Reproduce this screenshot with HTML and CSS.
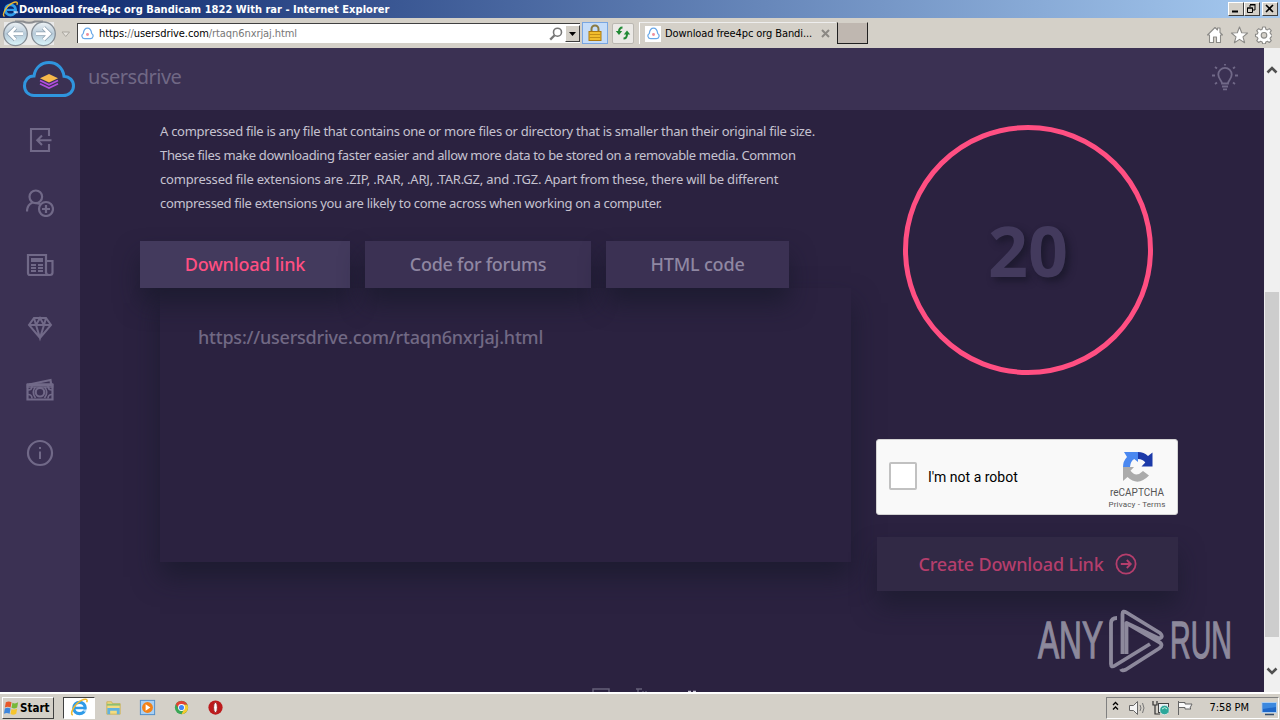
FILE: index.html
```html
<!DOCTYPE html>
<html lang="en">
<head>
<meta charset="utf-8">
<title>Download free4pc org Bandicam 1822 With rar</title>
<link rel="stylesheet" href="styles.css">
</head>
<body>
<svg width="0" height="0" class="defs">
  <defs>
    <symbol id="ie" viewBox="0 0 20 20">
      <circle cx="10" cy="10.5" r="6" fill="none" stroke="#2f9be8" stroke-width="3.4"/>
      <path d="M5 10.5h11" stroke="#2f9be8" stroke-width="2.6"/>
      <path d="M13 12.2h6v2.2h-4z" fill="#fff" opacity=".65"/>
      <path d="M3 18C-1 17 5 6 12 2.5c5-2.5 7-1 5.500 2" fill="none" stroke="#f0b92e" stroke-width="1.6"/>
    </symbol>
    <symbol id="fav" viewBox="0 0 14 14">
      <path d="M4 12.500a3 3 0 0 1-1.500-5.600C3 3 5 1.300 7 1.300S11 3 11.500 6.900A3 3 0 0 1 10 12.500z" fill="#fff" stroke="#68a8e8" stroke-width="1.300"/>
      <circle cx="7" cy="8" r="1.600" fill="#ee8d9b"/>
    </symbol>
  </defs>
</svg>

<header class="titlebar">
  <svg class="title-icon"><use href="#ie"/></svg>
  <h1 class="title"><span>Download free4pc org Bandicam 1822 With rar - Internet Explorer</span></h1>
  <div class="winbtns">
    <span class="winbtn"><svg viewBox="0 0 13 11"><path d="M3 8.500h6" stroke="#000" stroke-width="2"/></svg></span>
    <span class="winbtn"><svg viewBox="0 0 13 11"><path d="M5 4V2h5v5H8M5 1.500h5.500M2.500 5h5v4.500h-5zM2 5h6" fill="none" stroke="#000"/></svg></span>
    <span class="winbtn gap"><svg viewBox="0 0 13 11"><path d="M3 2l7 7M10 2L3 9" stroke="#000" stroke-width="1.600"/></svg></span>
  </div>
</header>

<div class="toolbar">
  <svg class="nav" viewBox="0 0 72 29">
    <defs><linearGradient id="ng" x1="0" y1="0" x2="0" y2="1"><stop offset="0" stop-color="#eef3f6"/><stop offset=".5" stop-color="#b8cbd9"/><stop offset="1" stop-color="#d9f4fb"/></linearGradient></defs>
    <path d="M4 3h50v23H4z" fill="#e9e9e9"/>
    <path d="M15 2.500h8q6 2.500 12 0h8" fill="none" stroke="#8c8d90" stroke-width="2"/>
    <circle cx="15.500" cy="14.800" r="11.800" fill="url(#ng)" stroke="#868e96" stroke-width="1.300"/>
    <circle cx="43.500" cy="14.800" r="11.800" fill="url(#ng)" stroke="#868e96" stroke-width="1.300"/>
    <path d="M23 14.800H9.500M15.500 8.800l-6 6 6 6M36 14.800h13.500M43.500 8.800l6 6-6 6" fill="none" stroke="#8da0b0" stroke-width="4.400"/>
    <path d="M23 14.800H9.500M15.500 8.800l-6 6 6 6M36 14.800h13.500M43.500 8.800l6 6-6 6" fill="none" stroke="#fff" stroke-width="2.900"/>
    <path d="M62 13h7.500l-3.750 4.500z" fill="#e5e2dd" stroke="#aaa69f"/>
  </svg>
  <div class="address">
    <svg class="fav"><use href="#fav"/></svg>
    <span class="url"><b>https:</b>//<b>usersdrive.com</b>/rtaqn6nxrjaj.html</span>
    <svg class="search" viewBox="0 0 14 14"><circle cx="8.500" cy="5.200" r="4" fill="none" stroke="#777" stroke-width="1.600"/><path d="M5.600 8.200L1.200 12.600" stroke="#777" stroke-width="2.300"/></svg>
    <span class="drop"><svg viewBox="0 0 7 4"><path d="M0 0h7L3.500 4z"/></svg></span>
  </div>
  <span class="lock"><svg viewBox="0 0 16 18"><path d="M4.500 8V5a3.500 3.500 0 0 1 7 0v3" fill="none" stroke="#8b7a40" stroke-width="2"/><rect x="2" y="7.500" width="12" height="9" fill="#f2bd2c" stroke="#ad7a11"/><path d="M2.500 10.500h11M2.500 13.500h11" stroke="#c58f16"/></svg></span>
  <span class="refresh"><svg viewBox="0 0 16 16"><path d="M7.500 2.500Q4 2.500 4 7M8.500 13.500Q12 13.500 12 9" fill="none" stroke="#218a35" stroke-width="2"/><path d="M.8 6h6.400L4 10zM8.800 9.500h6.400L12 5.500z" fill="#218a35"/></svg></span>
  <div class="tab">
    <span class="tab-fav"><svg class="fav"><use href="#fav"/></svg></span>
    <span class="tab-text">Download free4pc org Bandi...</span>
    <svg class="tab-x" viewBox="0 0 9 9"><path d="M1 1l7 7M8 1L1 8" stroke="#8b8883" stroke-width="2"/></svg>
  </div>
  <span class="newtab"></span>
  <svg class="tools" viewBox="0 0 66 18">
    <g fill="#fff" stroke="#8b8a87" stroke-width="1.100" stroke-linejoin="round">
      <path d="M1.500 9L9 1.500 11.500 4V2h2.500v4.500L16.500 9h-2v7.500h-4V11h-3v5.500h-4V9z"/>
      <path d="M33.500 1l2.200 5.800 5.900.2-4.600 3.800 1.600 5.900-5.100-3.300-5.100 3.300L30 10.800 25.400 7l5.900-.2z"/>
      <path d="M56.600 1h2.800l.4 2.200 1.600.7 1.900-1.300 2 2L64 6.500l.7 1.500 1.300.4v2.200l-1.300.6-.7 1.500 1.300 1.800-2 2-1.900-1.200-1.600.6-.4 1.900h-2.800l-.4-1.900-1.600-.6-1.900 1.200-2-2 1.300-1.800-.7-1.500-1.800-.6V8.400l1.800-.4.700-1.500-1.300-1.900 2-2 1.900 1.300 1.600-.7z"/>
      <circle cx="58" cy="9.300" r="2.800" fill="#d4d0c8"/>
    </g>
  </svg>
</div>

<main class="viewport">
  <div class="page">
    <div class="site-head">
      <svg class="logo" viewBox="0 0 54 38">
        <path d="M12 35.500h29c6 0 10.500-4 10.500-9.500 0-5.500-4-9.500-9.500-9.800C41 8 35 2.500 27 2.500S13 8 12 16C6 16 2.500 20.500 2.500 26S6.500 35.500 12 35.500z" fill="none" stroke="#2f95de" stroke-width="3"/>
        <path d="M27 14l9 4.300-9 4.200-9-4.200z" fill="#f6b84b"/>
        <path d="M18 20.500l9 4.200 9-4.200M18 23.800l9 4.200 9-4.200" fill="none" stroke="#b04ddd" stroke-width="1.800"/>
      </svg>
      <span class="brand">usersdrive</span>
      <svg class="bulb line" viewBox="0 0 28 28"><path d="M11 19.500c0-3-3.700-4.500-3.700-9a6.700 6.700 0 0 1 13.400 0c0 4.500-3.700 6-3.700 9zM11 22.500h6M12 25.300h4M1 11.500h3M24 11.500h3M4 3l2 1.500M24 3l-2 1.500M4 20l2-1.500M24 20l-2-1.500M14 0v1.500" stroke-width="1.800"/></svg>
    </div>
    <div class="body">
      <nav class="side">
        <svg class="line" viewBox="0 0 28 28"><path d="M23 10V3H5v22h18v-7M25.500 14.200H11.500M16 9.500l-4.700 4.700 4.700 4.700" stroke-width="2.100"/></svg>
        <svg class="line" viewBox="0 0 28 28"><circle cx="9.800" cy="7.800" r="6.300"/><path d="M1 22.500q0-6.500 5.500-9M10 14l4 1"/><circle cx="20" cy="20" r="7"/><path d="M20 16v8M16 20h8" stroke-width="2.200"/></svg>
        <svg class="line" viewBox="0 0 28 28"><path d="M20 22V4H2v18q0 2 2 2h20q2.500 0 2.500-2.500V10H20M20 21q0 3 3 3"/><path d="M5 8h12M5 10h12M5 14h5M12 14h5M5 17h5M12 17h5M5 20h5M12 20h5" stroke-width="2.100"/></svg>
        <svg class="line" viewBox="0 0 28 28"><path d="M8 4h12l5 7-11 13L3 11zM3 11h22M8 4l2 7 4 13 4-13 2-7M10 11l4-7 4 7" stroke-width="2"/></svg>
        <svg class="line" viewBox="0 0 28 28"><path d="M1.500 9h25v14.500h-25zM3 8.500L24.500 4l.7 4.500" /><circle cx="14" cy="16.200" r="4.300" stroke-width="2.200"/><path d="M1.500 8h25v3h-25zM2 14q4 0 4-4M26 14q-4 0-4-4M2 18.500q4 0 4 4M26 18.500q-4 0-4 4M9.500 11q-4.500 5 0 11M18.500 11q4.500 5 0 11" stroke-width="1.700"/></svg>
        <svg class="line" viewBox="0 0 28 28"><circle cx="14" cy="14" r="12"/><path d="M14 8v2M14 12.500V20" stroke-width="2"/></svg>
      </nav>
      <section class="content">
        <div class="left">
          <p class="desc">
            <span class="l1">A compressed file is any file that contains one or more files or directory that is smaller than their original file size.</span>
            <span class="l2">These files make downloading faster easier and allow more data to be stored on a removable media. Common</span>
            <span class="l3">compressed file extensions are .ZIP, .RAR, .ARJ, .TAR.GZ, and .TGZ. Apart from these, there will be different</span>
            <span class="l4">compressed file extensions you are likely to come across when working on a computer.</span>
          </p>
          <div class="tabs">
            <span class="btn b1">Download link</span>
            <span class="btn b2">Code for forums</span>
            <span class="btn b3">HTML code</span>
          </div>
          <div class="panel"><span>https://usersdrive.com/rtaqn6nxrjaj.html</span></div>
          <div class="foot-hints">
            <svg viewBox="0 0 110 4"><path d="M1 4V1h16v3" fill="none" stroke="#656078" stroke-width="1.500"/><path d="M44 1h6M46 1v3M51 3v1M54 3v1" stroke="#656078" stroke-width="1.400"/><path d="M96 3.500h3M101 3.500h3" stroke="#c7c3d4" stroke-width="1.500"/></svg>
          </div>
        </div>
        <div class="right">
          <div class="timer"><span>20</span></div>
          <div class="captcha">
            <span class="check"></span>
            <span class="robot">I'm not a robot</span>
            <div class="rc">
              <svg viewBox="0 0 32 32">
                <path d="M16 1q6 0 10 4l4.500-3.500V15.500H19.500l3.800-4Q21 8 16 8z" fill="#1c3aa9"/>
                <path d="M1 16Q1 10 5 6L2 1h14v10l-3.800-3Q8.500 10 8 16z" fill="#4a88f0"/>
                <path d="M1 16h11l-3.500 3.800Q14 27 21 20l6 4.500Q16 36 5.500 26L1 30z" fill="#ababab"/>
              </svg>
              <span class="rc-name">reCAPTCHA</span>
              <span class="rc-links">Privacy - Terms</span>
            </div>
          </div>
          <div class="create"><span>Create Download Link</span>
            <svg viewBox="0 0 22 22"><circle cx="11" cy="11" r="9.600"/><path d="M5.800 11h10M11.800 7l4 4-4 4"/></svg>
          </div>
        </div>
      </section>
    </div>
    <div class="watermark">
      <span class="wm wa">ANY</span>
      <svg viewBox="0 0 56 64"><path d="M9 9Q3 9 3 14V55Q3 59 7 56.500L42 35M14.500 45V5Q14.500 1 18.500 3.500L52 24Q56 28 51 29.500L18.500 14M13 60Q14 62.500 18 60.500L51 39.500Q56 36 51 33L18.500 14V45" fill="none" stroke="#8d899c" stroke-width="3.800" stroke-linejoin="round"/></svg>
      <span class="wm wr">RUN</span>
    </div>
  </div>
  <aside class="scroll">
    <svg viewBox="0 0 12 8"><path d="M1.500 6.500L6 2l4.500 4.500" /></svg>
    <i class="thumb"></i>
    <svg viewBox="0 0 12 8"><path d="M1.500 1.500L6 6l4.500-4.500"/></svg>
  </aside>
</main>

<footer class="taskbar">
  <div class="start">
    <svg viewBox="0 0 18 16"><path d="M3 2q3-2 6 0L8 7.500q-3-1.500-6 0z" fill="#e8582a"/><path d="M10 2.500q3 1.500 6-.5l-1 5.500q-3 2-6 .3z" fill="#77b83a"/><path d="M2 8.500q3-1.500 6 0L7 14q-3-1.500-6 0z" fill="#3e86dd"/><path d="M9 9q3 1.500 6-.5L14 14q-3 2-6 .3z" fill="#f6c52d"/></svg>
    <span>Start</span>
  </div>
  <span class="task active"><svg viewBox="0 0 20 20"><use href="#ie"/></svg></span>
  <span class="task"><svg viewBox="0 0 20 20"><path d="M3 4h5l1 2h8v11H3z" fill="#f3dc80" stroke="#cdb158"/><path d="M3 7h14" stroke="#8dbf74" stroke-width="2"/><path d="M5 17v-5h10v5" fill="none" stroke="#62b2de" stroke-width="3"/></svg></span>
  <span class="task"><svg viewBox="0 0 20 20"><rect x="2.500" y="2.500" width="15" height="15" fill="#a9d0f4" stroke="#4e8ecb"/><circle cx="10" cy="10" r="5.700" fill="#f38218"/><path d="M8 6.500v7l5-3.500z" fill="#fff"/></svg></span>
  <span class="task"><svg viewBox="0 0 20 20"><circle cx="10" cy="10" r="7" fill="#3aa655"/><path d="M4 6.500A7 7 0 0 1 16.200 7H10l-3 4z" fill="#e34133"/><path d="M16.200 7A7 7 0 0 1 10 17l3-6-1-4z" fill="#f7c92e"/><circle cx="10" cy="10" r="3.600" fill="#fff"/><circle cx="10" cy="10" r="2.700" fill="#4285f4"/></svg></span>
  <span class="task"><svg viewBox="0 0 20 20"><circle cx="10" cy="10" r="7.500" fill="#bd1a1c"/><ellipse cx="10" cy="10" rx="2" ry="5.200" fill="#fff" stroke="#861012" stroke-width=".8"/></svg></span>
  <div class="tray">
    <svg viewBox="0 0 88 20">
      <path d="M5 7l2.500-2.500L10 7M5 11.500L7.500 9l2.500 2.500" fill="none" stroke="#000" stroke-width="1.300"/>
      <path d="M21.500 7.500h4l4-4v13l-4-4h-4z" fill="#f4f4f4" stroke="#666"/><path d="M32 7q2 3 0 6M34.500 5q3 5 0 10" fill="none" stroke="#777"/>
      <rect x="50.500" y="5.500" width="10" height="9" fill="#e8f0f4" stroke="#444"/><path d="M45 3v4h4V3M47 7v9h5" fill="none" stroke="#333" stroke-width="1.200"/><circle cx="56.500" cy="12" r="4.700" fill="#2ca79a" stroke="#e8f0f4" stroke-width=".7"/><path d="M54 11q3-3 5 0" fill="none" stroke="#c7f2dc"/>
      <path d="M70.500 3v14M71 4.500h6v1.500h7l-2 4 1 1h-6v-1.500h-6" fill="#fafafa" stroke="#666"/>
    </svg>
    <span class="clock">7:58 PM</span>
    <svg class="desk" viewBox="0 0 16 16"><rect x="1" y="2.500" width="14.500" height="10" fill="#1e67c8" stroke="#abcdf0"/><path d="M2 3h13v4L2 9z" fill="#3b88df"/><path d="M4 14.500h9" stroke="#344d6b" stroke-width="1.500"/></svg>
  </div>
</footer>
</body>
</html>
```
FILE: styles.css
```css
* { box-sizing: border-box; }
body {
  margin: 0; width: 1280px; height: 720px; overflow: hidden;
  display: flex; flex-direction: column; background: #d4d0c8;
  font-family: "DejaVu Sans Condensed", "DejaVu Sans", sans-serif; font-size: 10.5px; color: #000;
}
svg { display: block; flex: none; }
span { white-space: nowrap; }
.defs { position: absolute; }

.titlebar { height: 18px; flex: none; display: flex; align-items: center; padding: 0 2px 0 2px; background: linear-gradient(90deg, #0a246a, #a6caf0); }
.title-icon { width: 17px; height: 17px; }
.title { margin: 0; flex: 1; font-size: 11px; font-weight: bold; color: #fff; line-height: 17px; letter-spacing: .03px; }
.winbtns { display: flex; }
.winbtn { width: 16px; height: 14px; background: #d4d0c8; border: 1px solid; border-color: #fff #404040 #404040 #fff; }
.winbtn svg { width: 13px; height: 11px; }
.winbtn.gap { margin-left: 2px; }

.toolbar { height: 30px; flex: none; display: flex; align-items: center; background: #d4d0c8; padding: 0 8px 0 0; }
.nav { width: 72px; height: 29px; margin-right: 5px; }
.address { width: 503px; height: 20px; background: #fff; border-top: 1px solid #404040; border-left: 1px solid #404040; display: flex; align-items: center; padding-left: 3px; }
.fav { width: 13px; height: 13px; }
.url { flex: 1; padding-left: 5px; color: #777; font-size: 11px; letter-spacing: -.08px; }
.url b { font-weight: normal; color: #000; }
.search { width: 14px; height: 14px; margin-right: 2px; }
.drop { width: 15px; height: 17px; background: #d4d0c8; border: 1px solid; border-color: #fff #404040 #404040 #fff; display: grid; place-items: center; }
.drop svg { width: 7px; height: 4px; }
.lock { width: 26px; height: 22px; margin-left: 2px; background: #c5dcf8; border: 1px solid #79a6e1; display: grid; place-items: center; }
.lock svg { width: 16px; height: 18px; }
.refresh { width: 22px; height: 21px; margin-left: 4px; background: #ebe9e6; border: 1px solid #bbb8b2; border-radius: 2px; display: grid; place-items: center; }
.refresh svg { width: 16px; height: 16px; }
.tab { width: 197px; height: 22px; margin-left: 5px; border-left: 1px solid #fff; border-top: 1px solid #eee; display: flex; align-items: center; padding-left: 5px; }
.tab-fav { width: 16px; height: 16px; background: #fff; display: grid; place-items: center; }
.tab-text { width: 148px; padding-left: 4px; font-size: 11px; letter-spacing: -.1px; }
.tab-x { width: 9px; height: 9px; margin-left: 12px; }
.newtab { width: 31px; height: 22px; margin-left: 1px; background: #bfb7b0; border: 1px solid; border-color: #d4d0c8 #202020 #202020 #202020; }
.tools { width: 66px; height: 18px; margin: 3px 0 0 auto; }

.viewport { height: 644px; flex: none; display: flex; }
.page { width: 1264px; position: relative; background: #2b2240; overflow: hidden; font-family: "Noto Sans", "Open Sans", sans-serif; }
.site-head { height: 62px; background: #3b3153; display: flex; align-items: center; padding: 0 25px 0 22px; }
.logo { width: 54px; height: 38px; }
.brand { flex: 1; padding-left: 12px; margin-top: -5px; font-size: 20px; color: #706885; letter-spacing: -.48px; }
.line { fill: none; stroke: #716988; stroke-width: 2.200; }
.bulb { width: 28px; height: 28px; margin-top: -2px; }
.body { display: flex; height: 582px; }
.side { width: 80px; background: #3b3153; display: flex; flex-direction: column; align-items: center; gap: 34.600px; padding-top: 16px; }
.side svg { width: 28px; height: 28px; }

.content { display: flex; flex: 1; }
.left { width: 771px; padding: 9px 0 0 80px; }
.desc { margin: 0; width: 691px; height: 122px; color: #c6c2d0; font-size: 13px; line-height: 24px; }
.desc span { display: block; }
.l1 { letter-spacing: -.275px; }
.l2 { letter-spacing: -.35px; }
.l3 { letter-spacing: -.19px; }
.l4 { letter-spacing: -.32px; }
.tabs { position: relative; z-index: 1; display: flex; gap: 15px; margin-left: -20px; }
.btn { height: 47px; line-height: 47px; text-align: center; font-size: 18px; font-weight: 500; letter-spacing: -.18px; color: #8f87a2; background: #3b3153; box-shadow: 0 15px 25px rgba(20,24,38,.6); }
.b1 { width: 210px; color: #ff4f82; background: #433a5d; }
.b2 { width: 226px; letter-spacing: -.27px; }
.b3 { width: 183px; }
.panel { width: 691px; height: 274px; padding: 37px 38px; font-size: 18px; line-height: 25px; font-weight: 500; letter-spacing: -.22px; color: #716984; box-shadow: 0 15px 25px rgba(20,24,38,.6); }
.foot-hints { padding: 126px 0 0 432px; }
.foot-hints svg { width: 110px; height: 4px; }
.right { width: 302px; margin-left: 25px; padding-top: 15px; }
.timer { width: 250px; height: 250px; margin-left: 27px; border: 5px solid #ff4f82; border-radius: 50%; display: grid; place-items: center; font: bold 70px "Open Sans", sans-serif; color: #433a5d; text-shadow: 4px 4px 7px rgba(20,20,35,.65); }
.timer span { margin-top: -1px; }
.captcha { margin-top: 64px; height: 76px; background: #f9f9f9; border: 1px solid #d3d3d3; border-radius: 3px; display: flex; align-items: center; padding: 0 11px 0 12px; font-family: Roboto, sans-serif; }
.check { width: 28px; height: 28px; border: 2px solid #c1c1c1; border-radius: 2px; background: #fff; margin-top: -2px; }
.robot { flex: 1; padding-left: 11px; font-size: 14px; color: #000; }
.rc { width: 58px; display: flex; flex-direction: column; align-items: center; color: #555; padding-top: 7px; }
.rc svg { width: 32px; height: 32px; margin-left: 2px; }
.rc-name { font-size: 10px; line-height: 12px; margin-top: 4px; }
.rc-links { font-size: 8px; line-height: 12px; letter-spacing: .18px; }
.create { width: 301px; height: 54px; margin: 22px 0 0 1px; display: flex; align-items: center; justify-content: center; gap: 11px; background: #312945; color: #b53e6c; font-size: 18px; font-weight: 500; letter-spacing: -.17px; box-shadow: 0 15px 25px rgba(20,24,38,.5); }
.create svg { width: 22px; height: 22px; fill: none; stroke: #b53e6c; stroke-width: 1.800; }

.watermark { position: absolute; left: 1038px; top: 561px; display: flex; align-items: center; color: #8d899c; height: 64px; }
.watermark svg { width: 56px; height: 64px; margin: 0 6px; }
.wm { width: 64px; font: 51px/64px "Liberation Sans", sans-serif; -webkit-text-stroke: 1.300px #8d899c; transform-origin: 0 50%; }
.wa { transform: scaleX(.62); }
.wr { width: 62px; transform: scaleX(.56); }

.scroll { width: 16px; background: #f0f0f0; display: flex; flex-direction: column; align-items: center; padding: 18px 0 17px; }
.scroll svg { width: 12px; height: 8px; fill: none; stroke: #505050; stroke-width: 2.600; }
.thumb { width: 14px; height: 345px; margin: 218px 0 auto; background: #cdcdcd; }

.taskbar { height: 28px; flex: none; border-top: 2px solid #fff; display: flex; align-items: center; padding-left: 2px; }
.start { width: 52px; height: 22px; margin: 1px 9px 0 0; border: 1px solid; border-color: #fff #404040 #404040 #fff; display: flex; align-items: center; }
.start svg { width: 17px; height: 16px; }
.start span { font-weight: bold; font-size: 11.500px; }
.task { width: 32px; height: 22px; margin: 1px 2px 0 0; display: grid; place-items: center; }
.task.active { background: #fff; border: 1px solid; border-color: #404040 #fff #fff #404040; }
.task svg { width: 19px; height: 19px; }
.tray { width: 173px; height: 22px; margin: 1px 1px 0 auto; border: 1px solid; border-color: #808080 #fff #fff #808080; display: flex; align-items: center; padding: 0 1px; }
.tray svg { width: 88px; height: 20px; }
.clock { flex: 1; text-align: right; padding-right: 12px; font-size: 11px; letter-spacing: -.05px; }
.tray .desk { width: 16px; height: 16px; }
```
